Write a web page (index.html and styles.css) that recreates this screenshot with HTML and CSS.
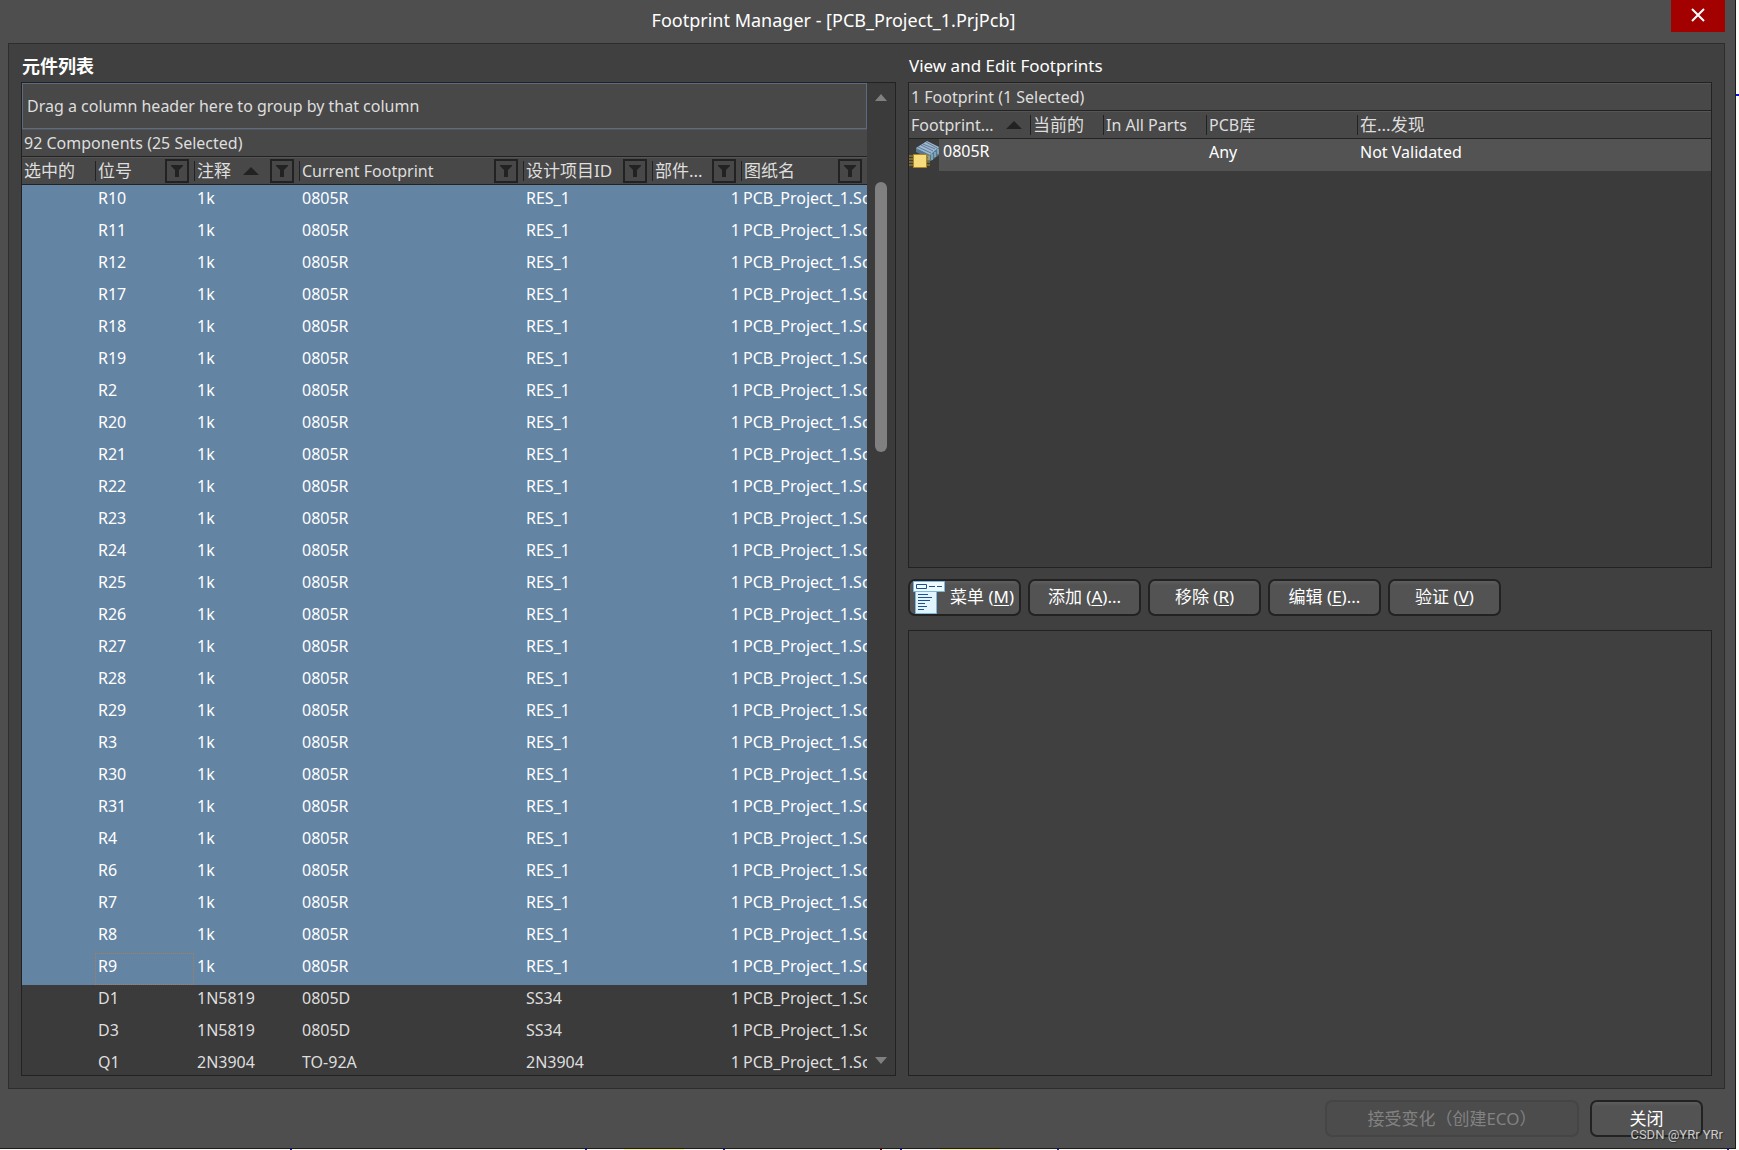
FILE: index.html
```
<!DOCTYPE html>
<html lang="zh-CN">
<head>
<meta charset="utf-8">
<title>Footprint Manager</title>
<link rel="stylesheet" href="styles.css">
</head>
<body>
<svg class="defs" aria-hidden="true">
  <symbol id="funnel" viewBox="0 0 12 12"><path d="M0 0h12v1l-4 4v7H4V5L0 1z"/></symbol>
</svg>
<main class="dialog">
  <header class="titlebar">
    <h1>Footprint Manager - [PCB_Project_1.PrjPcb]</h1>
    <button class="close" aria-label="Close"><svg viewBox="0 0 14 14"><path d="M1 1l12 12M13 1L1 13"/></svg></button>
  </header>
  <div class="panel">
    <section class="left">
      <h2 class="cjk-title">元件列表</h2>
      <div class="box list">
        <div class="grid">
          <div class="groupby">Drag a column header here to group by that column</div>
          <div class="band">92 Components (25 Selected)</div>
          <div class="scroller">
          <table class="components">
            <colgroup><col class="c1"><col class="c2"><col class="c3"><col class="c4"><col class="c5"><col class="c6"><col class="c7"></colgroup>
            <thead><tr id="head"></tr></thead>
            <tbody id="rows"></tbody>
          </table>
          </div>
        </div>
        <div class="scrollbar">
          <svg class="arrow" viewBox="0 0 12 7"><path d="M6 0l6 7H0z"/></svg>
          <div class="track"><div class="thumb"></div></div>
          <svg class="arrow" viewBox="0 0 12 7"><path d="M0 0h12L6 7z"/></svg>
        </div>
      </div>
    </section>
    <section class="right">
      <h2>View and Edit Footprints</h2>
      <div class="box footprints">
        <div class="band">1 Footprint (1 Selected)</div>
        <table class="prints">
          <colgroup><col class="p1"><col class="p2"><col class="p3"><col class="p4"><col></colgroup>
          <thead><tr>
            <th><div class="th"><span>Footprint...</span><svg class="sort" viewBox="0 0 16 8"><path d="M8 0l8 8H0z"/></svg></div></th>
            <th><div class="th cjk">当前的</div></th>
            <th><div class="th">In All Parts</div></th>
            <th><div class="th">PCB库</div></th>
            <th><div class="th cjk">在...发现</div></th>
          </tr></thead>
          <tbody><tr>
            <td><div class="name">
              <svg class="chip" viewBox="0 0 30 30">
                <path d="M7 9v4l10 5v4h5l8-6V8z" fill="#54788f"/>
                <path d="M7 9L18 2l12 6-9 8z" fill="#9fb6cf"/>
                <path d="M9 8l13 6M12 6l12 6M14 5l12 5M17 3l11 6" stroke="#5f7c9b" fill="none"/>
                <path d="M23 15v6M26 13v5M29 10v5M20 17v4" stroke="#a9ccd4" fill="none"/>
                <path d="M0 17h21M0 20h21M0 23h21M0 26h21" stroke="#b8982f" fill="none"/>
                <path d="M4.500 15.500h13v13h-13z" fill="#f6dc7c" stroke="#a98520"/>
              </svg><span>0805R</span></div></td>
            <td></td><td></td><td>Any</td><td>Not Validated</td>
          </tr></tbody>
        </table>
      </div>
      <div class="actions">
        <button class="btn menu"><svg viewBox="0 0 32 34">
          <path d="M2.500 11.500h21v22h-21z" fill="#e0f5fd" stroke="#7fb8de"/>
          <path d="M.500 1.500h31v10H.500z" fill="#ecf9fe" stroke="#7fb8de"/>
          <path d="M3.500 4.500h10v4h-10zM16 6.500h6M24 6.500h5M5 14.500h10M5 17.500h14M5 20.500h12M5 23.500h7M5 26.500h9M5 29.500h6" fill="none" stroke="#1d4f91"/>
        </svg><span>菜单 (<u>M</u>)</span></button>
        <button class="btn">添加 (<u>A</u>)...</button>
        <button class="btn">移除 (<u>R</u>)</button>
        <button class="btn">编辑 (<u>E</u>)...</button>
        <button class="btn">验证 (<u>V</u>)</button>
      </div>
      <div class="box preview"></div>
    </section>
  </div>
  <footer class="footer">
    <button class="btn accept" disabled>接受变化（创建ECO）</button>
    <button class="btn">关闭</button>
  </footer>
</main>
<div class="watermark">CSDN @YRr YRr</div>
<script src="app.js"></script>
</body>
</html>
```
FILE: styles.css
```
* { box-sizing: border-box; }
body {
  margin: 0;
  height: 100vh;
  padding: 0 3px 1px 0;
  background:
    linear-gradient(#1414e0, #1414e0) 100% 94px / 3px 2px no-repeat,
    linear-gradient(90deg, transparent 290px, #1414e0 290px 292px, transparent 292px 585px,
      #1414e0 585px 587px, transparent 587px 624px, #f5f5a0 624px 684px, transparent 684px 723px,
      #1414e0 723px 725px, transparent 725px 880px, #800000 880px 882px, transparent 882px 900px,
      #1414e0 900px 902px, transparent 902px 940px, #f5f5a0 940px 1000px, transparent 1000px 1057px,
      #1414e0 1057px 1059px, transparent 1059px 1727px, #1414e0 1727px 1729px, transparent 1729px) 0 100% / 100% 1px no-repeat,
    #fdfbf6;
  color: #dedede;
  font: 16px/24px "Noto Sans", "Noto Sans CJK SC", sans-serif;
  overflow: hidden;
}
.defs { position: absolute; width: 0; height: 0; }
h1, h2 { margin: 0; font-weight: 400; color: #fff; }
.dialog {
  height: 100%;
  display: flex;
  flex-direction: column;
  background: #4e4e4e;
  border: solid #1c1c1c;
  border-width: 0 1px 1px 0;
}
.titlebar { height: 43px; flex: none; display: grid; grid-template-columns: 64px 1fr 54px 10px; }
.titlebar h1 { grid-column: 1 / -1; grid-row: 1; text-align: center; font-size: 18px; line-height: 40px; padding-right: 68px; }
.titlebar .close { grid-column: 3; grid-row: 1; height: 32px; border: 0; padding: 0 0 2px; background: #a30000; display: grid; place-items: center; }
.close svg { width: 14px; height: 14px; stroke: #fff; stroke-width: 2; fill: none; }
.panel {
  flex: 1;
  min-height: 0;
  margin: 0 10px 0 8px;
  padding: 10px 12px 12px;
  border: 1px solid #2d2d2d;
  background: #404040;
  display: grid;
  grid-template-columns: 875fr 804fr;
  gap: 12px;
}
section { display: flex; flex-direction: column; min-width: 0; min-height: 0; }
h2 { font-size: 17px; line-height: 24px; height: 28px; }
.right h2 { -webkit-text-stroke: 0; padding-left: 1px; }
.cjk-title { font-size: 18px; font-weight: 600; padding-left: 1px; }
.box { border: 1px solid #222; background: #3b3b3b; min-height: 0; }
.list { flex: 1; display: flex; }
.grid { flex: 1; min-width: 0; display: flex; flex-direction: column; }
.groupby { height: 46px; flex: none; border: 1px solid #5a6b82; background: #484848; padding: 0 4px; line-height: 44px; }
.band { height: 28px; flex: none; background: linear-gradient(#555 1px, #484848 1px); border-bottom: 1px solid #222; padding: 1px 2px 0; line-height: 27px; }
.scroller { flex: 1; min-height: 0; overflow: hidden; }
table { width: 100%; border-collapse: separate; border-spacing: 0; table-layout: fixed; }
th { height: 28px; padding: 0; font-weight: 400; text-align: left; background: linear-gradient(#555 1px, #484848 1px); border-bottom: 1px solid #222; }
.th { display: flex; align-items: center; height: 20px; line-height: 20px; padding: 0 5px 0 2px; border-left: 1px solid #222; white-space: nowrap; }
.cjk { font-size: 17px; }
th:first-child .th { border-left: 0; }
.th .filter { margin-left: auto; width: 24px; height: 24px; flex: none; border: 2px solid #222; background: none; padding: 0; display: grid; place-items: center; }
.filter svg { width: 12px; height: 12px; fill: #222; }
.sort { width: 16px; height: 8px; fill: #222; margin-left: 12px; flex: none; }
td { height: 32px; padding: 0 0 6px 3px; white-space: nowrap; overflow: hidden; }
.components td:nth-child(6) { text-align: right; padding-right: 1px; }
.components td:nth-child(7) { padding-left: 2px; }
.picked td { background: #6384a3; color: #fff; }
td.focus { outline: 1px dotted #a8805c; outline-offset: -1px; }
.c1 { width: 73px; } .c2 { width: 99px; } .c3 { width: 105px; } .c4 { width: 224px; }
.c5 { width: 129px; } .c6 { width: 89px; }
.scrollbar { width: 28px; flex: none; padding: 11px 8px; display: flex; flex-direction: column; align-items: center; }
.arrow { width: 12px; height: 7px; fill: #808080; flex: none; }
.track { flex: 1; width: 12px; padding: 81px 0; }
.thumb { height: 34%; min-height: 32px; border-radius: 6px; background: #808080; }
.footprints { flex: 486 1 0; }
.prints td { background: #535353; color: #fff; }
.prints td:first-child { padding: 0; background: linear-gradient(90deg, #3b3b3b 30px, #535353 30px); }
.p1 { width: 121px; } .p2 { width: 73px; } .p3 { width: 103px; } .p4 { width: 151px; }
.name { display: flex; height: 32px; }
.chip { width: 30px; height: 30px; margin-right: 4px; }
.actions { display: flex; gap: 7px; padding: 11px 0 14px; }
.btn {
  width: 113px; height: 37px; padding: 0;
  border: 2px solid #222; border-radius: 7px;
  background: linear-gradient(#5e5e5e, #535353 4px);
  color: #fff; font: inherit; font-size: 17px; white-space: nowrap;
}
.btn u { text-underline-offset: 2px; }
.menu { display: flex; align-items: center; gap: 5px; padding-left: 3px; }
.menu svg { width: 32px; height: 34px; flex: none; }
.preview { flex: 446 1 0; background: #404040; }
.footer { flex: none; display: flex; justify-content: flex-end; gap: 11px; padding: 11px 32px 11px; }
.accept { width: 254px; color: #828282; border-color: #454545; background: #4c4c4c; }
.watermark { position: absolute; right: 16px; bottom: 5px; font: 13px/20px Roboto, sans-serif; color: #ccc; text-shadow: 1px 1px 1px #333; }
```
FILE: app.js
```
const columns = [
  ["选中的", false], ["位号", true], ["注释", true, true], ["Current Footprint", true],
  ["设计项目ID", true], ["部件...", true], ["图纸名", true],
];
const filter = '<button class="filter" aria-label="Filter"><svg><use href="#funnel"/></svg></button>';
const sort = '<svg class="sort" viewBox="0 0 16 8"><path d="M8 0l8 8H0z"/></svg>';
document.getElementById("head").innerHTML = columns.map(([name, hasFilter, sorted]) =>
  `<th><div class="th"><span class="${/^[A-Z]/.test(name) ? "" : "cjk"}">${name}</span>${sorted ? sort : ""}${hasFilter ? filter : ""}</div></th>`).join("");

const resistors = [10, 11, 12, 17, 18, 19, 2, 20, 21, 22, 23, 24, 25, 26, 27, 28, 29, 3, 30, 31, 4, 6, 7, 8, 9];
const parts = resistors.map(n => ["R" + n, "1k", "0805R", "RES_1"]).concat([
  ["D1", "1N5819", "0805D", "SS34"],
  ["D3", "1N5819", "0805D", "SS34"],
  ["Q1", "2N3904", "TO-92A", "2N3904"],
]);
document.getElementById("rows").innerHTML = parts.map(([id, ...rest], i) =>
  `<tr class="${i < resistors.length ? "picked" : ""}"><td></td><td class="${id === "R9" ? "focus" : ""}">${id}</td>` +
  rest.map(t => `<td>${t}</td>`).join("") + "<td>1</td><td>PCB_Project_1.SchDoc</td></tr>").join("");
```
